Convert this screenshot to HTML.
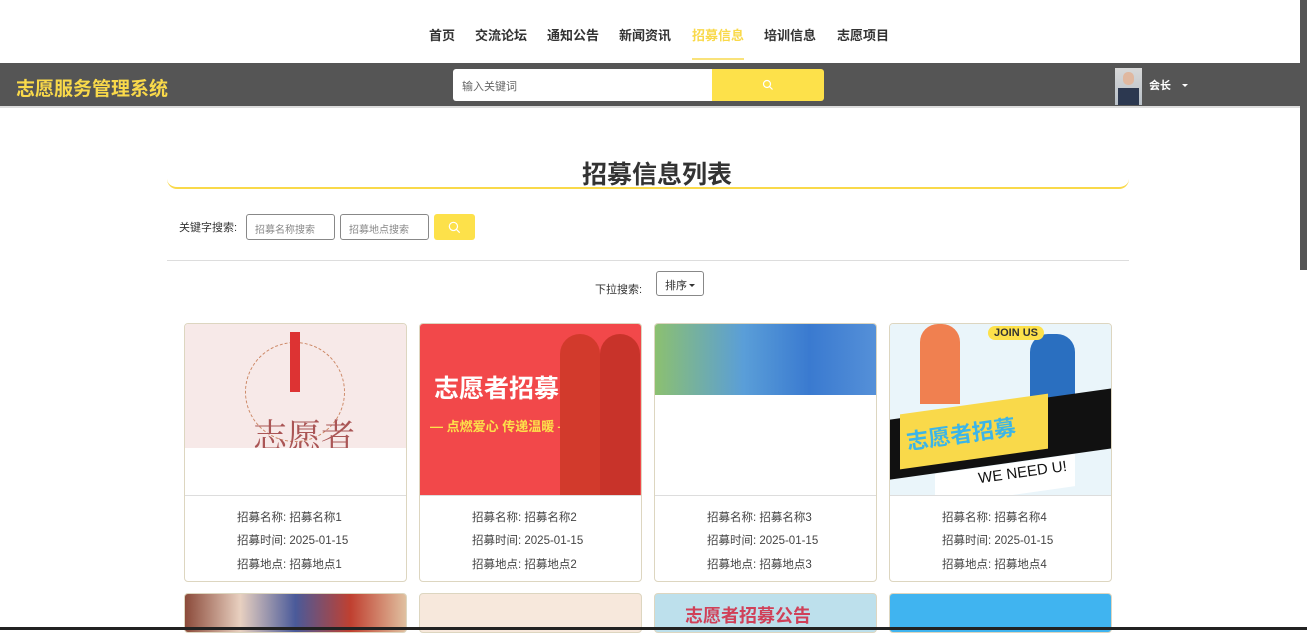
<!DOCTYPE html>
<html><head><meta charset="utf-8"><style>
*{margin:0;padding:0;box-sizing:border-box}
body{width:1307px;height:630px;overflow:hidden;background:#fff;font-family:"Liberation Sans","Noto Sans CJK SC",sans-serif;position:relative;color:#333}
.a{position:absolute}
.nav span{position:absolute;top:25px;font-size:13px;font-weight:bold;color:#333}
.card{position:absolute;top:323px;width:223px;height:259px;border:1px solid #ddd6c0;border-radius:4px;overflow:hidden;background:#fff}
.card .img{position:absolute;left:0;top:0;width:100%;height:172px;overflow:hidden}
.card .line{position:absolute;left:0;top:171px;width:100%;border-top:1px solid #ddd}
.card p{position:absolute;left:52px;font-size:11.5px;color:#444}
.card2{position:absolute;top:593px;width:223px;height:40px;border:1px solid #ddd6c0;border-radius:4px;overflow:hidden}
</style></head><body>
<div class="nav">
<span style="left:429px">首页</span><span style="left:475px">交流论坛</span><span style="left:547px">通知公告</span><span style="left:619px">新闻资讯</span><span style="left:692px;color:#f9d94a">招募信息</span><span style="left:764px">培训信息</span><span style="left:837px">志愿项目</span>
</div>
<div class="a" style="left:692px;top:58px;width:52px;height:2px;background:#f9e27a"></div>
<div class="a" style="left:0;top:63px;width:1300px;height:44px;background:#555"></div>
<div class="a" style="left:0;top:106px;width:1300px;height:2px;background:#ddd"></div>
<div class="a" style="left:16px;top:74px;font-size:19px;font-weight:bold;color:#f9d94a">志愿服务管理系统</div>
<div class="a" style="left:453px;top:69px;width:260px;height:32px;background:#fff;border-radius:3px 0 0 3px;font-size:11px;color:#666;padding:9px 9px">输入关键词</div>
<div class="a" style="left:712px;top:69px;width:112px;height:32px;background:#fde14a;border-radius:0 3px 3px 0"><svg class="a" style="left:50px;top:10px" width="12" height="12" viewBox="0 0 12 12"><circle cx="5" cy="5" r="3.5" fill="none" stroke="#fff" stroke-width="1.2"/><path d="M7.5 7.5L10.5 10.5" stroke="#fff" stroke-width="1.2"/></svg></div>
<div class="a" style="left:1115px;top:68px;width:27px;height:37px;background:linear-gradient(#d8d8d8,#b8c0c8)"><div class="a" style="left:8px;top:4px;width:11px;height:13px;border-radius:5px;background:#e0b8a0"></div><div class="a" style="left:3px;top:20px;width:21px;height:17px;background:#2c3850"></div></div>
<div class="a" style="left:1149px;top:77px;font-size:11px;font-weight:bold;color:#fff">会长</div>
<div class="a" style="left:1182px;top:84px;border:3px solid transparent;border-top-color:#fff"></div>
<div class="a" style="left:1300px;top:0;width:7px;height:270px;background:#555"></div>
<div class="a" style="left:582px;top:155px;font-size:25px;font-weight:bold;color:#333">招募信息列表</div>
<div class="a" style="left:167px;top:176px;width:962px;height:13px;border-bottom:2px solid #f9d94a;border-radius:0 0 10px 10px"></div>
<div class="a" style="left:179px;top:219px;font-size:11px">关键字搜索:</div>
<div class="a" style="left:246px;top:214px;width:89px;height:26px;border:1px solid #888;border-radius:3px;font-size:10px;color:#888;padding:6px 8px">招募名称搜索</div>
<div class="a" style="left:340px;top:214px;width:89px;height:26px;border:1px solid #888;border-radius:3px;font-size:10px;color:#888;padding:6px 8px">招募地点搜索</div>
<div class="a" style="left:434px;top:214px;width:41px;height:26px;background:#fde14a;border-radius:3px"><svg class="a" style="left:14px;top:7px" width="13" height="13" viewBox="0 0 12 12"><circle cx="5" cy="5" r="3.8" fill="none" stroke="#fff" stroke-width="1.1"/><path d="M7.8 7.8L10.8 10.8" stroke="#fff" stroke-width="1.1"/></svg></div>
<div class="a" style="left:167px;top:260px;width:962px;border-top:1px solid #ddd"></div>
<div class="a" style="left:595px;top:281px;font-size:11px">下拉搜索:</div>
<div class="a" style="left:656px;top:271px;width:48px;height:25px;border:1px solid #888;border-radius:3px;font-size:11px;padding:5px 8px">排序<span style="display:inline-block;margin-left:2px;vertical-align:2px;border:3px solid transparent;border-top-color:#333;border-bottom:0"></span></div>

<div class="card" style="left:184px"><div class="img" style="height:124px;background:#f7e9e8"><div class="a" style="left:60px;top:18px;width:100px;height:100px;border:1px dashed #c86;border-radius:50%"></div><div class="a" style="left:68px;top:85px;font-size:34px;color:#a55;font-family:'Noto Serif CJK SC',serif">志愿者</div><div class="a" style="left:105px;top:8px;width:10px;height:60px;background:#d33"></div></div><div class="line"></div>
<p style="top:185px">招募名称: 招募名称1</p><p style="top:208px">招募时间: 2025-01-15</p><p style="top:232px">招募地点: 招募地点1</p></div>

<div class="card" style="left:419px"><div class="img" style="background:#f2484a"><div class="a" style="left:14px;top:45px;font-size:25px;font-weight:bold;color:#fff">志愿者招募</div><div class="a" style="left:10px;top:92px;font-size:13px;font-weight:bold;color:#fde14a">— 点燃爱心 传递温暖 —</div><div class="a" style="left:140px;top:10px;width:40px;height:162px;background:#d23a2c;border-radius:20px 20px 0 0"></div><div class="a" style="left:180px;top:10px;width:40px;height:162px;background:#c8332a;border-radius:20px 20px 0 0"></div></div><div class="line"></div>
<p style="top:185px">招募名称: 招募名称2</p><p style="top:208px">招募时间: 2025-01-15</p><p style="top:232px">招募地点: 招募地点2</p></div>

<div class="card" style="left:654px"><div class="img" style="height:71px;background:linear-gradient(90deg,#8cc070,#5a9ed8 40%,#3a7ad0 70%,#5590d8)"></div><div class="line"></div>
<p style="top:185px">招募名称: 招募名称3</p><p style="top:208px">招募时间: 2025-01-15</p><p style="top:232px">招募地点: 招募地点3</p></div>

<div class="card" style="left:889px"><div class="img" style="background:#eaf5fa"><div class="a" style="left:30px;top:0;width:40px;height:80px;background:#f08050;border-radius:18px 18px 0 0"></div><div class="a" style="left:140px;top:10px;width:45px;height:75px;background:#2a6fc0;border-radius:18px 18px 0 0"></div><div class="a" style="left:98px;top:2px;font-size:11px;font-weight:bold;background:#fde14a;border-radius:8px;padding:1px 6px">JOIN US</div><div class="a" style="left:0;top:80px;width:222px;height:60px;background:#111;transform:skewY(-8deg)"></div><div class="a" style="left:10px;top:80px;width:148px;height:55px;background:#f9d94a;transform:skewY(-8deg)"></div><div class="a" style="left:16px;top:93px;font-size:22px;font-weight:bold;color:#3bb5e8;transform:rotate(-8deg)">志愿者招募</div><div class="a" style="left:45px;top:140px;width:140px;height:32px;background:#fff;transform:skewY(-8deg)"></div><div class="a" style="left:88px;top:140px;font-size:15px;color:#111;transform:rotate(-8deg)">WE NEED U!</div></div><div class="line"></div>
<p style="top:185px">招募名称: 招募名称4</p><p style="top:208px">招募时间: 2025-01-15</p><p style="top:232px">招募地点: 招募地点4</p></div>

<div class="card2" style="left:184px;background:linear-gradient(90deg,#8b4a3a,#e8d0c0,#4a5a9a,#c04030,#e0c0a0)"></div>
<div class="card2" style="left:419px;background:#f7e8dc"></div>
<div class="card2" style="left:654px;background:#bde0ec"><div class="a" style="left:30px;top:8px;font-size:18px;color:#d04058;font-weight:bold">志愿者招募公告</div></div>
<div class="card2" style="left:889px;background:#40b4f0"></div>
<div class="a" style="left:0;top:627px;width:1307px;height:3px;background:#222"></div>
</body></html>
